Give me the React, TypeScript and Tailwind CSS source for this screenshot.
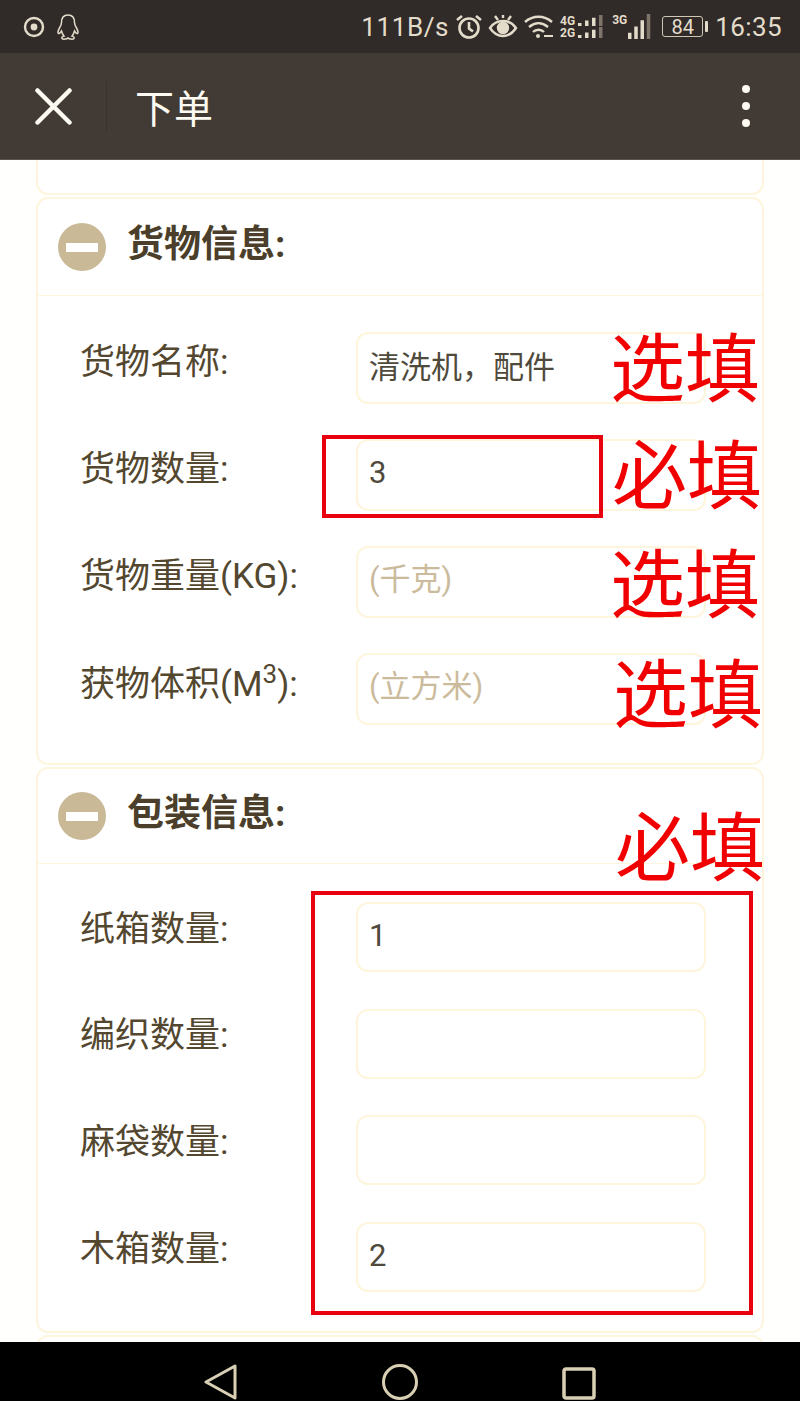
import React from "react";

const cjk = "font-['Noto_Sans_CJK_SC','Noto_Sans',sans-serif]";

function Field({ label, sup, suffix, value, placeholder, h, labelH, textPad }: { label: string; sup?: string; suffix?: string; value?: string; placeholder?: string; h: string; labelH: string; textPad: string }) {
  return (
    <div className="flex items-start">
      <div className={`w-[318px] shrink-0 pl-[42px] ${labelH} flex items-center text-[35px] leading-none text-[#53472f] whitespace-nowrap font-['Roboto','Noto_Sans_CJK_SC',sans-serif]`}>
        <span>{label}{sup && <sup className="text-[26px] leading-none">{sup}</sup>}{suffix}</span>
      </div>
      <input
        readOnly
        defaultValue={value}
        placeholder={placeholder}
        className={`w-[350px] shrink-0 ${h} ${textPad} rounded-[12px] border-2 border-[#fdf5dc] bg-white px-[11px] text-[31px] text-[#4f4a3c] outline-none placeholder:text-[#cbbb9c] font-['Roboto','Noto_Sans_CJK_SC',sans-serif]`}
      />
    </div>
  );
}

function SectionHeader({ title, h }: { title: string; h: string }) {
  return (
    <div className={`${h} flex items-center pl-[20px] border-b border-[#fdf5dc]`}>
      <div className="w-[48px] h-[48px] rounded-full bg-[#c9b997] flex items-center justify-center">
        <div className="w-[32px] h-[9px] bg-white" />
      </div>
      <div className="ml-[21px] -mt-[6px] text-[37px] leading-none font-bold text-[#4b3f2b] font-['Roboto','Noto_Sans_CJK_SC',sans-serif]">{title}</div>
    </div>
  );
}

function Bars({ n, w, h }: { n: number; w: number; h: number }) {
  const items = Array.from({ length: n });
  const step = w / n;
  return (
    <svg width={w} height={h} viewBox={`0 0 ${w} ${h}`}>
      {items.map((_, i) => {
        const bh = Math.max(3, (h * (i + 1)) / n);
        return <rect key={i} x={i * step + 1} y={h - bh} width="3.5" height={bh} fill={i === n - 1 ? "#7d756a" : "#e4dccb"} />;
      })}
    </svg>
  );
}

function StatusIcons() {
  const c = "#e4dccb";
  return (
    <div className="flex items-center">
      <span className="text-[26px] leading-none tracking-[0.6px] text-[#e4dccb] font-['Roboto',sans-serif]">111B/s</span>
      <svg className="ml-[6px]" width="28" height="28" viewBox="0 0 28 28" fill="none" stroke={c} strokeWidth="2.6">
        <circle cx="14" cy="15" r="9.5" /><path d="M14 9v6.5l4 3" /><path d="M2 7l5-4M26 7l-5-4" />
      </svg>
      <svg className="ml-[5px]" width="30" height="26" viewBox="0 0 30 26" fill="none" stroke={c} strokeWidth="2.4">
        <path d="M2 14c4-6 8-7 13-7s9 1 13 7c-4 6-8 8-13 8s-9-2-13-8z" /><circle cx="15" cy="14" r="5" fill={c} /><path d="M7 2l3 4M23 2l-3 4M15 1v3" />
      </svg>
      <svg className="ml-[6px]" width="30" height="26" viewBox="0 0 30 26" fill="none" stroke={c} strokeWidth="2.4">
        <path d="M1 8c8-7 19-7 27 0M5 13c6-5 13-5 19 0M9 18c3-3 8-3 11 0" /><circle cx="14" cy="22" r="2" fill={c} stroke="none" /><path d="M20 22h9" strokeWidth="2" />
      </svg>
      <div className="ml-[6px] flex flex-col text-[12px] leading-[12px] font-bold text-[#e4dccb] font-['Roboto',sans-serif]">
        <div className="flex items-center gap-[2px]"><span>4G</span><Bars n={4} w={28} h={11} /></div>
        <div className="flex items-center gap-[2px]"><span>2G</span><Bars n={4} w={28} h={11} /></div>
      </div>
      <div className="ml-[7px] flex items-start text-[12px] leading-[12px] font-bold text-[#e4dccb] font-['Roboto',sans-serif]">
        <span>3G</span>
        <Bars n={4} w={25} h={25} />
      </div>
      <div className="ml-[10px] flex items-center">
        <div className="w-[41px] h-[21px] rounded-[3px] border border-[#cfc6b4] flex items-center justify-center text-[20px] leading-none text-[#e4dccb] font-['Roboto',sans-serif]">84</div>
        <div className="ml-[2px] w-[3px] h-[11px] bg-[#e4dccb] rounded-[1px]" />
      </div>
      <span className="ml-[7px] text-[26px] leading-none tracking-[0.4px] text-[#e4dccb] font-['Roboto',sans-serif]">16:35</span>
    </div>
  );
}

function Note({ text, className }: { text: string; className: string }) {
  return <div className={`absolute text-[75px] leading-none text-[#f00000] whitespace-nowrap ${cjk} ${className}`}>{text}</div>;
}

export default function App() {
  return (
    <div className={`relative w-[800px] h-[1401px] overflow-hidden bg-white flex flex-col ${cjk}`}>
      {/* status bar */}
      <div className="h-[53px] shrink-0 bg-[#302b28] flex items-center justify-between pl-[23px] pr-[18px]">
        <div className="flex items-center gap-[11px]">
          <svg width="22" height="22" viewBox="0 0 22 22" fill="none">
            <circle cx="11" cy="11" r="9" stroke="#e4dccb" strokeWidth="2.4" /><circle cx="11" cy="11" r="3.4" fill="#e4dccb" />
          </svg>
          <svg width="24" height="26" viewBox="0 0 24 26" fill="none" stroke="#e4dccb" strokeWidth="1.5">
            <path d="M12 1c-4.5 0-6.5 3.500-6.500 7.500 0 2-.5 3-2 5.500C2 16.500 1.500 19 2.500 19.500c1 .3 2-1 3-2.500 .5 2 1 3.500 2.500 5-2 .5-2.500 1.500-2 2.500 1 1 5 .8 6-.5 1 1.300 5 1.500 6 .5 .5-1 0-2-2-2.500 1.500-1.500 2-3 2.500-5 1 1.500 2 2.800 3 2.500 1-.5 .5-3-1-5.500-1.500-2.500-2-3.500-2-5.500C18.500 4.500 16.500 1 12 1z" />
          </svg>
        </div>
        <StatusIcons />
      </div>

      {/* title bar */}
      <div className="h-[107px] shrink-0 bg-[#423a34] flex items-center border-b border-[#5d5348]">
        <svg className="ml-[35px]" width="37" height="37" viewBox="0 0 37 37" stroke="#fdfaf2" strokeWidth="4.500" strokeLinecap="round">
          <path d="M2.500 2.500l32 32M34.500 2.500l-32 32" />
        </svg>
        <div className="ml-[34px] w-px h-[50px] bg-[#38312e]" />
        <div className="ml-[28px] text-[39px] leading-none text-[#fdfaf2]">下单</div>
        <div className="ml-auto mr-[50px] flex flex-col gap-[9px]">
          <div className="w-[8px] h-[8px] rounded-full bg-[#fdfaf2]" />
          <div className="w-[8px] h-[8px] rounded-full bg-[#fdfaf2]" />
          <div className="w-[8px] h-[8px] rounded-full bg-[#fdfaf2]" />
        </div>
      </div>

      {/* scrolling content */}
      <div className="flex-1 min-h-0 overflow-hidden flex flex-col pl-[36px] gap-[2px] bg-[#fffffd]">
        <div className="w-[728px] h-[35px] shrink-0 rounded-b-[12px] border-2 border-t-0 border-[#fdf5dc] bg-white" />
        <div className="w-[728px] h-[568px] shrink-0 rounded-[12px] border-2 border-[#fdf5dc] bg-white">
          <SectionHeader title="货物信息:" h="h-[97px]" />
          <div className="pt-[36px] flex flex-col gap-[35px]">
            <Field label="货物名称:" value="清洗机，配件" h="h-[72px]" labelH="h-[60px]" textPad="pb-[7px]" />
            <Field label="货物数量:" value="3" h="h-[72px]" labelH="h-[60px]" textPad="pb-[6px]" />
            <Field label="货物重量(KG):" placeholder="(千克)" h="h-[72px]" labelH="h-[60px]" textPad="pb-[6px]" />
            <Field label="获物体积(M" sup="3" suffix="):" placeholder="(立方米)" h="h-[72px]" labelH="h-[62px]" textPad="pb-[6px]" />
          </div>
        </div>
        <div className="w-[728px] h-[566px] shrink-0 rounded-[12px] border-2 border-[#fdf5dc] bg-white">
          <SectionHeader title="包装信息:" h="h-[95px]" />
          <div className="pt-[38px] flex flex-col gap-[36.600px]">
            <Field label="纸箱数量:" value="1" h="h-[70px]" labelH="h-[54px]" textPad="pb-[3px]" />
            <Field label="编织数量:" h="h-[70px]" labelH="h-[54px]" textPad="pb-[3px]" />
            <Field label="麻袋数量:" h="h-[70px]" labelH="h-[54px]" textPad="pb-[3px]" />
            <Field label="木箱数量:" value="2" h="h-[70px]" labelH="h-[56px]" textPad="pb-[3px]" />
          </div>
        </div>
        <div className="w-[728px] h-[40px] shrink-0 rounded-t-[12px] border-2 border-[#fdf5dc] bg-white" />
      </div>

      {/* android nav bar */}
      <div className="h-[59px] shrink-0 bg-black flex items-end justify-center gap-[144px] pb-[1px] relative">
        <svg width="34" height="36" viewBox="0 0 34 36" fill="none" stroke="#d9cfb4" strokeWidth="3" strokeLinejoin="round">
          <path d="M31 2v32L2 18z" />
        </svg>
        <svg width="36" height="36" viewBox="0 0 36 36" fill="none" stroke="#d9cfb4" strokeWidth="3">
          <ellipse cx="18" cy="18" rx="16.500" ry="16.500" />
        </svg>
        <svg width="34" height="33" viewBox="0 0 34 33" fill="none" stroke="#d9cfb4" strokeWidth="3.500">
          <rect x="2" y="2" width="30" height="29" rx="2" />
        </svg>
      </div>

      {/* hand-drawn annotations over the screenshot */}
      <Note text="选填" className="left-[610px] top-[326px]" />
      <Note text="必填" className="left-[612px] top-[433px]" />
      <Note text="选填" className="left-[610px] top-[542px]" />
      <Note text="选填" className="left-[613px] top-[652px]" />
      <Note text="必填" className="left-[615px] top-[805px]" />
      <div className="absolute left-[322px] top-[435px] w-[281px] h-[83px] border-[4px] border-[#e8000f]" />
      <div className="absolute left-[311px] top-[891px] w-[442px] h-[424px] border-[4px] border-[#e8000f]" />
    </div>
  );
}
